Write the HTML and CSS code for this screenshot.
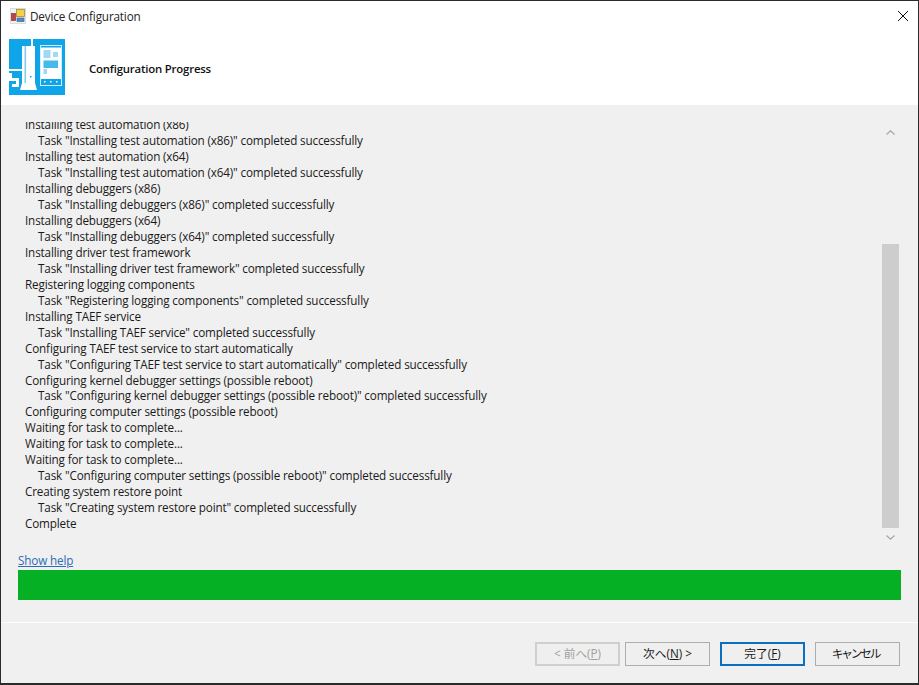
FILE: index.html
```html
<!DOCTYPE html>
<html lang="en">
<head>
<meta charset="utf-8">
<title>Device Configuration</title>
<link rel="stylesheet" href="styles.css">
</head>
<body>
<div class="window">
  <div class="top">
    <div class="titlebar">
      <svg class="appicon" viewBox="0 0 16 16" width="16" height="16">
        <rect x="0.5" y="0.5" width="15" height="15" fill="#f2f2f2" stroke="#dcdcdc"/>
        <rect x="6.5" y="1.5" width="8" height="7" fill="#f7d04a" stroke="#a58a3a" stroke-width="0.8"/>
        <rect x="1.5" y="5.5" width="4" height="7" fill="#c8403f" stroke="#7d4a4a" stroke-width="0.8"/>
        <rect x="7" y="10" width="7" height="3.5" fill="#4d8ad0" stroke="#44678f" stroke-width="0.7"/>
      </svg>
      <span class="titletext">Device Configuration</span>
      <svg class="close" viewBox="0 0 10 10" width="10" height="10"><path d="M0 0L10 10M10 0L0 10" stroke="#111" stroke-width="1" fill="none"/></svg>
    </div>
    <div class="banner">
      <svg class="logo" viewBox="0 0 56 56" width="56" height="56">
        <rect width="56" height="56" fill="#10a5e8"/>
        <rect x="22" y="0" width="2" height="7" fill="#fff"/>
        <rect x="0" y="30" width="13" height="2" fill="#fff"/>
        <rect x="13" y="7" width="13" height="37" fill="#fff"/>
        <rect x="15.5" y="7" width="1.6" height="37" fill="#7fcdf1"/>
        <path d="M13 44h13l2 7H11z" fill="#fff"/>
        <rect x="21" y="37" width="1.5" height="1.5" fill="#10a5e8"/>
        <path d="M0 34h3v5h7v6h-3v-3H0z" fill="#fff"/>
        <path d="M3 45h7v3H3z" fill="#fff"/>
        <rect x="31" y="6" width="22" height="41" fill="#d3eefb"/>
        <rect x="32" y="7" width="20" height="39" fill="#10a5e8"/>
        <rect x="32" y="8.5" width="20" height="31.5" fill="#fff"/>
        <rect x="34.5" y="11" width="7" height="8" fill="#9fd9f5"/>
        <rect x="44" y="13" width="5" height="5" fill="#9fd9f5"/>
        <rect x="34.5" y="21.5" width="14.5" height="7.5" fill="#45b8ec"/>
        <rect x="34.5" y="30" width="3.5" height="5" fill="#9fd9f5"/>
        <rect x="35" y="42" width="1.5" height="1.5" fill="#fff"/>
        <rect x="41" y="42" width="1.5" height="1.5" fill="#fff"/>
        <rect x="47" y="42" width="1.5" height="1.5" fill="#fff"/>
      </svg>
      <h1 class="heading">Configuration Progress</h1>
    </div>
  </div>
  <div class="content">
    <div class="logrow">
      <div class="log">
        <div class="loginner">
          <div class="line">Installing test automation (x86)</div>
          <div class="line task">Task "Installing test automation (x86)" completed successfully</div>
          <div class="line">Installing test automation (x64)</div>
          <div class="line task">Task "Installing test automation (x64)" completed successfully</div>
          <div class="line">Installing debuggers (x86)</div>
          <div class="line task">Task "Installing debuggers (x86)" completed successfully</div>
          <div class="line">Installing debuggers (x64)</div>
          <div class="line task">Task "Installing debuggers (x64)" completed successfully</div>
          <div class="line">Installing driver test framework</div>
          <div class="line task">Task "Installing driver test framework" completed successfully</div>
          <div class="line">Registering logging components</div>
          <div class="line task">Task "Registering logging components" completed successfully</div>
          <div class="line">Installing TAEF service</div>
          <div class="line task">Task "Installing TAEF service" completed successfully</div>
          <div class="line">Configuring TAEF test service to start automatically</div>
          <div class="line task">Task "Configuring TAEF test service to start automatically" completed successfully</div>
          <div class="line">Configuring kernel debugger settings (possible reboot)</div>
          <div class="line task">Task "Configuring kernel debugger settings (possible reboot)" completed successfully</div>
          <div class="line">Configuring computer settings (possible reboot)</div>
          <div class="line">Waiting for task to complete...</div>
          <div class="line">Waiting for task to complete...</div>
          <div class="line">Waiting for task to complete...</div>
          <div class="line task">Task "Configuring computer settings (possible reboot)" completed successfully</div>
          <div class="line">Creating system restore point</div>
          <div class="line task">Task "Creating system restore point" completed successfully</div>
          <div class="line">Complete</div>
        </div>
      </div>
      <div class="scrollbar">
        <svg class="chev" viewBox="0 0 9 5" width="9" height="5"><path d="M0.5 4.5L4.5 0.8L8.5 4.5" fill="none" stroke="#a6a6a6" stroke-width="1.2"/></svg>
        <div class="thumb"></div>
        <svg class="chev" viewBox="0 0 9 5" width="9" height="5"><path d="M0.5 0.5L4.5 4.2L8.5 0.5" fill="none" stroke="#a6a6a6" stroke-width="1.2"/></svg>
      </div>
    </div>
    <a class="help" href="#">Show help</a>
    <div class="progress"></div>
  </div>
  <div class="footer">
    <button class="btn disabled" type="button">&lt; 前へ(<u>P</u>)</button>
    <button class="btn" type="button">次へ(<u>N</u>) &gt;</button>
    <button class="btn default" type="button">完了(<u>F</u>)</button>
    <button class="btn kana" type="button">キャンセル</button>
  </div>
</div>
</body>
</html>
```
FILE: styles.css
```css
* { box-sizing: border-box; }
html, body { margin: 0; padding: 0; height: 100%; }
body { font-family: "Open Sans", "Noto Sans CJK JP", sans-serif; font-size: 11.7px; letter-spacing: -0.15px; color: #1a1a1a; }
.window { width: 919px; height: 685px; border: 1px solid #2b2b2b; border-bottom-width: 2px; background: #f0f0f0; display: flex; flex-direction: column; overflow: hidden; }
.top { background: #fff; height: 104px; flex: none; }
.titlebar { height: 30px; display: flex; align-items: center; padding: 0 10px 0 9px; }
.appicon { flex: none; margin-right: 4px; }
.titletext { flex: 1; color: #222; }
.close { flex: none; }
.banner { display: flex; align-items: center; padding: 8px 0 0 8px; }
.logo { flex: none; }
.heading { margin: 2px 0 0 24px; font-size: 11.4px; font-weight: 600; color: #111; letter-spacing: -0.2px; }
.content { flex: 1; display: flex; flex-direction: column; padding: 0 17px; }
.logrow { display: flex; height: 430px; margin-top: 17px; }
.log { flex: 1; overflow: hidden; padding-left: 7px; }
.loginner { margin-top: -6px; }
.line { height: 15.97px; line-height: 16px; white-space: nowrap; }
.task { padding-left: 13px; }
.scrollbar { width: 17px; margin-right: 2px; display: flex; flex-direction: column; align-items: center; padding-top: 8px; }
.chev { flex: none; }
.thumb { width: 17px; height: 284px; background: #cdcdcd; margin: 109px 0 7px; }
.help { color: #2b6cb5; height: 16px; line-height: 16px; text-decoration: underline; align-self: flex-start; }
.progress { height: 30px; background: #06b025; margin-top: 2px; }
.footer { height: 61px; flex: none; border-top: 1px solid #fcfcfc; display: flex; justify-content: flex-end; padding: 19px 18px 0 0; gap: 5px; }
.btn { width: 85px; height: 24px; background: #efefef; border: 1px solid #adadad; font: 11.7px "Open Sans", "Noto Sans CJK JP", sans-serif; color: #1a1a1a; padding: 0 0 4px; }
.btn.disabled { color: #a0a0a0; border: 2px solid #cfcfcf; }
.btn.default { border: 2px solid #0b6fbd; margin: 0 5px; }
.btn.kana { letter-spacing: -2.2px; padding-right: 4px; }
```
